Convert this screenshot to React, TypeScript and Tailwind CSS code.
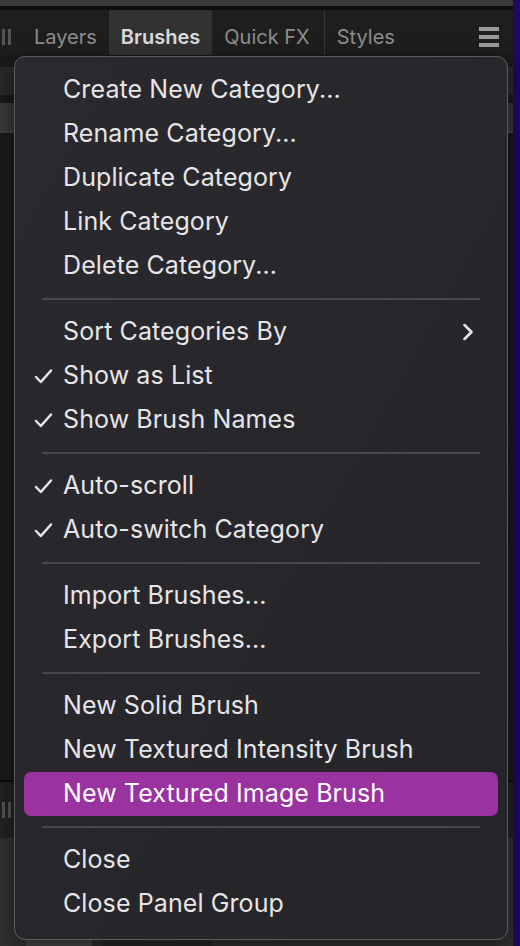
import { ChevronRight } from "lucide-react";

type Item = { label: string; checked?: boolean; submenu?: boolean; active?: boolean };

const groups: Item[][] = [
  [
    { label: "Create New Category..." },
    { label: "Rename Category..." },
    { label: "Duplicate Category" },
    { label: "Link Category" },
    { label: "Delete Category..." },
  ],
  [
    { label: "Sort Categories By", submenu: true },
    { label: "Show as List", checked: true },
    { label: "Show Brush Names", checked: true },
  ],
  [
    { label: "Auto-scroll", checked: true },
    { label: "Auto-switch Category", checked: true },
  ],
  [{ label: "Import Brushes..." }, { label: "Export Brushes..." }],
  [
    { label: "New Solid Brush" },
    { label: "New Textured Intensity Brush" },
    { label: "New Textured Image Brush", active: true },
  ],
  [{ label: "Close" }, { label: "Close Panel Group" }],
];

const tabs = ["Layers", "Brushes", "Quick FX", "Styles"];

function Check() {
  return (
    <svg width="19" height="17" viewBox="0 0 19 17" className="absolute left-[10px] top-[14px]">
      <path d="M2 9 L6.8 14 L17 2.5" fill="none" stroke="#e8e8ea" strokeWidth="2.5" strokeLinecap="round" strokeLinejoin="round" />
    </svg>
  );
}

function Row({ item }: { item: Item }) {
  return (
    <div
      className={`relative flex h-[44px] items-center pl-[39px] pr-[16px] rounded-[7px] ${
        item.active ? "bg-[#9a32a0] text-white" : "text-[#e6e5e8]"
      }`}
    >
      {item.checked && <Check />}
      <span className="flex-1 whitespace-nowrap tracking-[0.1px]">{item.label}</span>
      {item.submenu && <ChevronRight size={28} strokeWidth={2.2} className="text-[#e6e5e8]" />}
    </div>
  );
}

export default function App() {
  return (
    <div className="relative h-[946px] w-[520px] overflow-hidden bg-[#1c1c1c] font-['Inter',sans-serif]">
      <div className="flex h-full">
        <div className="flex w-[513px] flex-col">
          <div className="h-[6px] bg-[#3a3a3a]" />
          <div className="h-[4px] bg-[#0e0e0e]" />
          {/* tab bar */}
          <div className="flex h-[45px] items-stretch bg-[#1e1e1e] text-[20px]">
            <div className="flex w-[22px] items-center gap-[3px] pl-[2px] pt-[8px]">
              <span className="h-[16px] w-[3px] bg-[#555]" />
              <span className="h-[16px] w-[3px] bg-[#555]" />
            </div>
            {tabs.map((t) => (
              <div
                key={t}
                className={`flex items-center px-[12px] pt-[8px] ${
                  t === "Brushes" ? "bg-[#323232] font-semibold text-[#dcdcdc]" : "text-[#8e8e8e]"
                } ${t === "Quick FX" ? "border-r border-[#383838] pr-[14px]" : ""}`}
              >
                {t}
              </div>
            ))}
            <div className="flex flex-1 items-center justify-end pr-[14px] pt-[8px]">
              <div className="flex flex-col gap-[4px]">
                <span className="h-[4px] w-[20px] bg-[#9a9a9a]" />
                <span className="h-[4px] w-[20px] bg-[#9a9a9a]" />
                <span className="h-[4px] w-[20px] bg-[#9a9a9a]" />
              </div>
            </div>
          </div>
          {/* panel body behind menu */}
          <div className="h-[12px] bg-[#1a1a1a]" />
          <div className="h-[28px] bg-[#2a2a2a]" />
          <div className="h-[8px] bg-[#1a1a1a]" />
          <div className="h-[28px] bg-[#3a3a3a]" />
          <div className="h-[2px] bg-[#444]" />
          <div className="flex-1 bg-[#1b1b1b]" />
          <div className="h-[2px] bg-[#0c0c0c]" />
          <div className="flex h-[56px] items-center gap-[3px] bg-[#232323] pl-[2px]">
            <span className="h-[16px] w-[3px] bg-[#555]" />
            <span className="h-[16px] w-[3px] bg-[#555]" />
          </div>
          <div className="flex h-[108px] items-end gap-[10px] bg-[#323232] pl-[26px]">
            <div className="h-[14px] w-[66px] bg-[#4a4a4a]" />
            <div className="h-[10px] w-[110px] bg-[#2a2a2a]" />
          </div>
        </div>
        <div className="w-[7px] bg-[#1e0b5c]" />
      </div>

      {/* popup menu */}
      <div className="absolute left-[14px] top-[56px] w-[494px] rounded-[11px] border border-[#5c5b5f] bg-gradient-to-br from-[#2a292d] to-[#252428] px-[9px] pt-[11px] pb-[13px] text-[25px] shadow-[0_8px_24px_rgba(0,0,0,0.5)]">
        {groups.map((g, i) => (
          <div key={i}>
            {i > 0 && (
              <div className="flex h-[22px] items-center px-[18px]">
                <div className="h-[2px] w-full bg-[#48474b]" />
              </div>
            )}
            {g.map((item) => (
              <Row key={item.label} item={item} />
            ))}
          </div>
        ))}
      </div>
    </div>
  );
}
